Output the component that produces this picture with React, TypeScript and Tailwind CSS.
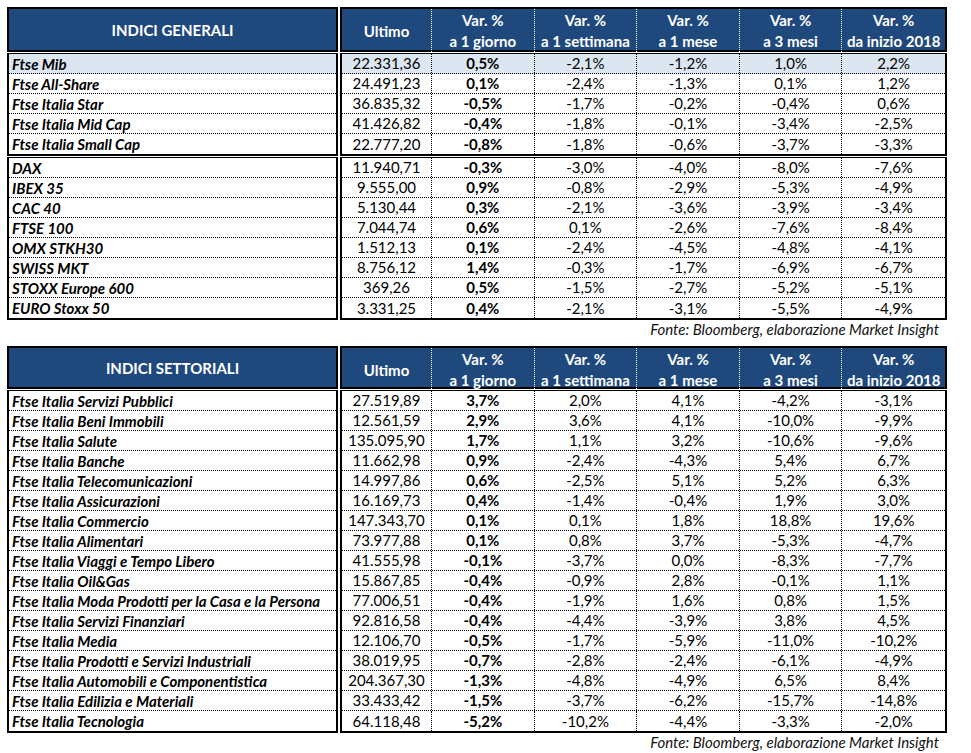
type Row = [string, string, string, string, string, string, string];

const cols = ['Ultimo', 'a 1 giorno', 'a 1 settimana', 'a 1 mese', 'a 3 mesi', 'da inizio 2018'];

const generali: Row[][] = [
  [
    ['Ftse Mib', '22.331,36', '0,5%', '-2,1%', '-1,2%', '1,0%', '2,2%'],
    ['Ftse All-Share', '24.491,23', '0,1%', '-2,4%', '-1,3%', '0,1%', '1,2%'],
    ['Ftse Italia Star', '36.835,32', '-0,5%', '-1,7%', '-0,2%', '-0,4%', '0,6%'],
    ['Ftse Italia Mid Cap', '41.426,82', '-0,4%', '-1,8%', '-0,1%', '-3,4%', '-2,5%'],
    ['Ftse Italia Small Cap', '22.777,20', '-0,8%', '-1,8%', '-0,6%', '-3,7%', '-3,3%'],
  ],
  [
    ['DAX', '11.940,71', '-0,3%', '-3,0%', '-4,0%', '-8,0%', '-7,6%'],
    ['IBEX 35', '9.555,00', '0,9%', '-0,8%', '-2,9%', '-5,3%', '-4,9%'],
    ['CAC 40', '5.130,44', '0,3%', '-2,1%', '-3,6%', '-3,9%', '-3,4%'],
    ['FTSE 100', '7.044,74', '0,6%', '0,1%', '-2,6%', '-7,6%', '-8,4%'],
    ['OMX STKH30', '1.512,13', '0,1%', '-2,4%', '-4,5%', '-4,8%', '-4,1%'],
    ['SWISS MKT', '8.756,12', '1,4%', '-0,3%', '-1,7%', '-6,9%', '-6,7%'],
    ['STOXX Europe 600', '369,26', '0,5%', '-1,5%', '-2,7%', '-5,2%', '-5,1%'],
    ['EURO Stoxx 50', '3.331,25', '0,4%', '-2,1%', '-3,1%', '-5,5%', '-4,9%'],
  ],
];

const settoriali: Row[][] = [
  [
    ['Ftse Italia Servizi Pubblici', '27.519,89', '3,7%', '2,0%', '4,1%', '-4,2%', '-3,1%'],
    ['Ftse Italia Beni Immobili', '12.561,59', '2,9%', '3,6%', '4,1%', '-10,0%', '-9,9%'],
    ['Ftse Italia Salute', '135.095,90', '1,7%', '1,1%', '3,2%', '-10,6%', '-9,6%'],
    ['Ftse Italia Banche', '11.662,98', '0,9%', '-2,4%', '-4,3%', '5,4%', '6,7%'],
    ['Ftse Italia Telecomunicazioni', '14.997,86', '0,6%', '-2,5%', '5,1%', '5,2%', '6,3%'],
    ['Ftse Italia Assicurazioni', '16.169,73', '0,4%', '-1,4%', '-0,4%', '1,9%', '3,0%'],
    ['Ftse Italia Commercio', '147.343,70', '0,1%', '0,1%', '1,8%', '18,8%', '19,6%'],
    ['Ftse Italia Alimentari', '73.977,88', '0,1%', '0,8%', '3,7%', '-5,3%', '-4,7%'],
    ['Ftse Italia Viaggi e Tempo Libero', '41.555,98', '-0,1%', '-3,7%', '0,0%', '-8,3%', '-7,7%'],
    ['Ftse Italia Oil&Gas', '15.867,85', '-0,4%', '-0,9%', '2,8%', '-0,1%', '1,1%'],
    ['Ftse Italia Moda Prodotti per la Casa e la Persona', '77.006,51', '-0,4%', '-1,9%', '1,6%', '0,8%', '1,5%'],
    ['Ftse Italia Servizi Finanziari', '92.816,58', '-0,4%', '-4,4%', '-3,9%', '3,8%', '4,5%'],
    ['Ftse Italia Media', '12.106,70', '-0,5%', '-1,7%', '-5,9%', '-11,0%', '-10,2%'],
    ['Ftse Italia Prodotti e Servizi Industriali', '38.019,95', '-0,7%', '-2,8%', '-2,4%', '-6,1%', '-4,9%'],
    ['Ftse Italia Automobili e Componentistica', '204.367,30', '-1,3%', '-4,8%', '-4,9%', '6,5%', '8,4%'],
    ['Ftse Italia Edilizia e Materiali', '33.433,42', '-1,5%', '-3,7%', '-6,2%', '-15,7%', '-14,8%'],
    ['Ftse Italia Tecnologia', '64.118,48', '-5,2%', '-10,2%', '-4,4%', '-3,3%', '-2,0%'],
  ],
];

function Header({ title, tall }: { title: string; tall: boolean }) {
  const h = tall ? 'h-[45px]' : 'h-[43px]';
  return (
    <div className="flex gap-[2px]">
      <div className={`w-[331px] ${h} border-2 border-black bg-[#1f497d] flex items-center justify-center pt-[1px] text-white font-bold`}>
        {title}
      </div>
      <div className={`w-[607px] ${h} border-2 border-black bg-[#1f497d] grid grid-cols-[90px_repeat(5,1fr)] text-white font-bold`}>
        {cols.map((c, i) => (
          <div
            key={c}
            className={`flex flex-col items-center justify-center pt-[1px] leading-[21px] ${i < 5 ? 'border-r border-dotted border-white' : ''}`}
          >
            {i === 0 ? (
              <span>{c}</span>
            ) : (
              <>
                <span>Var. %</span>
                <span>{c}</span>
              </>
            )}
          </div>
        ))}
      </div>
    </div>
  );
}

function Group({ rows, highlightFirst }: { rows: Row[]; highlightFirst?: boolean }) {
  return (
    <div className="flex gap-[2px]">
      <div className="w-[331px] border-x-2 border-b-2 border-t border-black">
        {rows.map((r, i) => (
          <div
            key={r[0]}
            className={`h-[20px] flex items-center pt-[1px] pl-[3px] font-bold italic border-b border-dotted border-black last:border-b-0 ${highlightFirst && i === 0 ? 'bg-[#dce6f1]' : ''}`}
          >
            {r[0]}
          </div>
        ))}
      </div>
      <div className="w-[607px] border-x-2 border-b-2 border-t border-black">
        {rows.map((r, i) => (
          <div
            key={r[0]}
            className={`h-[20px] grid grid-cols-[90px_repeat(5,1fr)] border-b border-dotted border-black last:border-b-0 ${highlightFirst && i === 0 ? 'bg-[#dce6f1]' : ''}`}
          >
            {r.slice(1).map((v, j) => (
              <div
                key={j}
                className={`flex items-center justify-center leading-none ${j === 1 ? 'font-bold' : ''} ${j < 5 ? 'border-r border-dotted border-black' : ''}`}
              >
                {v}
              </div>
            ))}
          </div>
        ))}
      </div>
    </div>
  );
}

function Fonte() {
  return (
    <div className="w-[938px] text-right italic pr-[6px] leading-[16px] mt-[1px] text-[#111]">
      Fonte: Bloomberg, elaborazione Market Insight
    </div>
  );
}

export default function App() {
  return (
    <div className="min-h-[753px] w-[971px] bg-white pt-[7px] pl-[7px] text-[15px] text-black font-['Lato',sans-serif]">
      <div className="flex flex-col gap-[1px]">
        <Header title="INDICI GENERALI" tall />
        <Group rows={generali[0]} highlightFirst />
        <Group rows={generali[1]} />
      </div>
      <Fonte />
      <div className="flex flex-col gap-[1px] mt-[9px]">
        <Header title="INDICI SETTORIALI" tall={false} />
        <Group rows={settoriali[0]} />
      </div>
      <Fonte />
    </div>
  );
}
